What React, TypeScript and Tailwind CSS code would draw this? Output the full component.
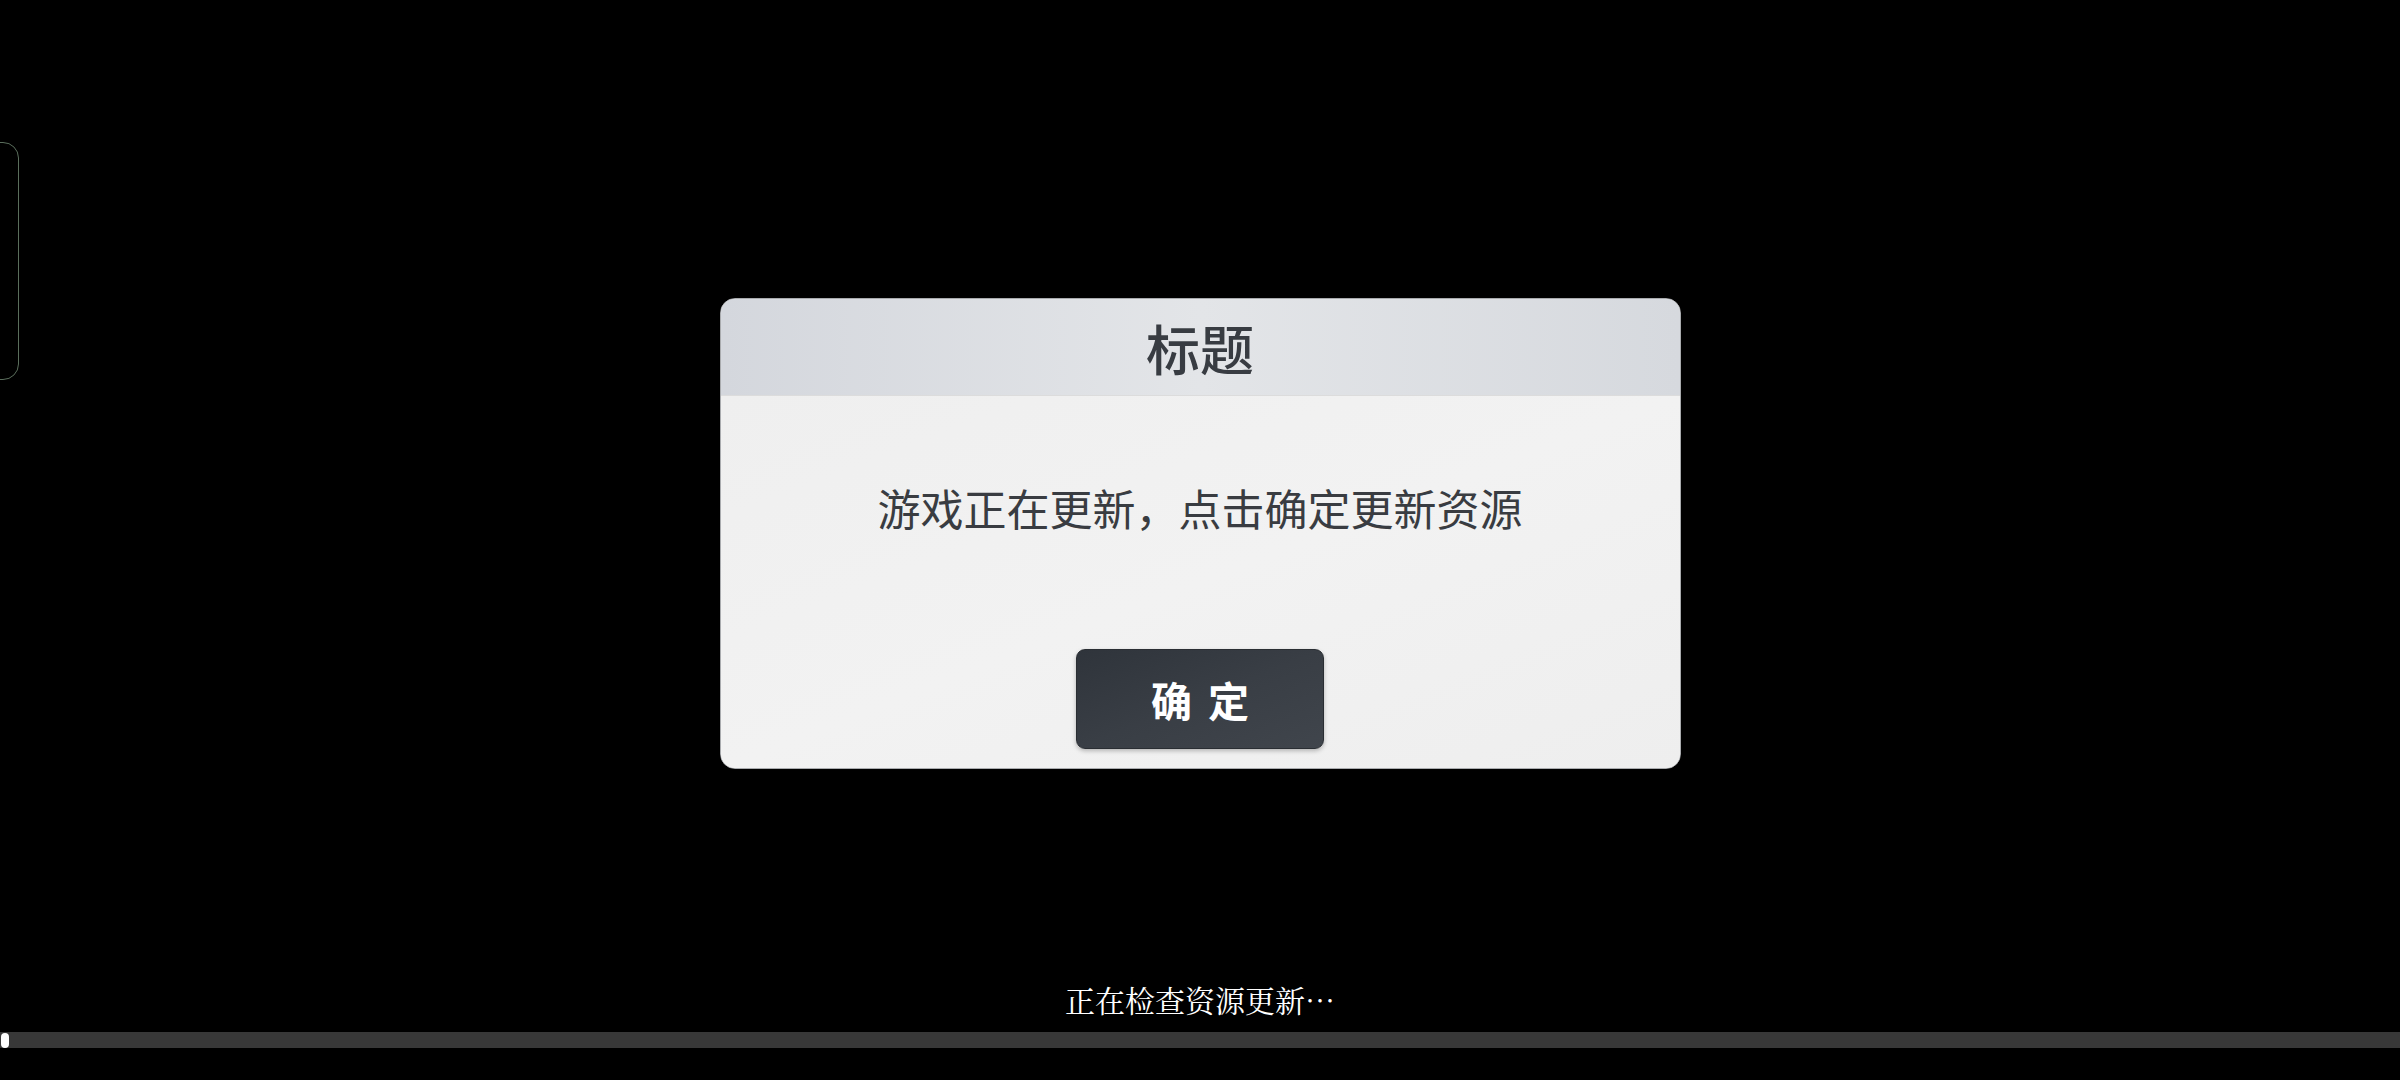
import React from "react";

export default function App() {
  return (
    <div
      className="relative w-[2400px] h-[1080px] bg-black overflow-hidden flex flex-col"
      style={{ fontFamily: '"Noto Sans CJK SC", "Noto Sans", sans-serif' }}
    >
      {/* left edge floating tab */}
      <div className="absolute left-[-24px] top-[142px] w-[43px] h-[238px] rounded-[16px] border border-[#5a6e5c]" />

      <div className="pt-[298px] flex justify-center">
        <div className="w-[961px] h-[471px] rounded-[15px] overflow-hidden border border-[#a9abae] flex flex-col bg-gradient-to-b from-[#eeeeee] to-[#f1f1f1] shadow-[0_2px_6px_rgba(0,0,0,0.4)]">
          <div className="h-[97px] shrink-0 flex items-center justify-center pt-[2px] bg-gradient-to-r from-[#d4d7dd] via-[#e3e5e8] to-[#d6d9de] border-b border-[#dcdcdc]">
            <span className="text-[54px] leading-[54px] font-medium text-[#383c42]">标题</span>
          </div>
          <div className="flex-1 flex flex-col items-center bg-gradient-to-br from-[#efefef] via-[#f2f2f2] to-[#eeeeee]">
            <div className="pt-[90px] text-[43px] leading-[43px] text-[#393c41] font-normal">
              游戏正在更新，点击确定更新资源
            </div>
            <button className="mt-[120px] w-[248px] h-[100px] rounded-[9px] bg-gradient-to-br from-[#2f343b] via-[#393e45] to-[#40454c] shadow-[0_2px_4px_rgba(0,0,0,0.25)] border border-[#2a2e33] flex items-center justify-center">
              <span className="text-[41px] leading-[41px] font-bold text-white tracking-[16px] pl-[16px]">确定</span>
            </button>
          </div>
        </div>
      </div>

      <div className="flex-1" />

      <div
        className="text-center text-[30px] leading-[30px] text-white"
        style={{ fontFamily: '"Noto Serif CJK SC", "Noto Sans CJK SC", serif' }}
      >
        正在检查资源更新…
      </div>
      <div className="mt-[18px] h-[16px] w-full bg-[#383838] flex items-center">
        <div className="ml-[1px] w-[8px] h-[15px] rounded-full bg-white" />
      </div>
      <div className="h-[32px]" />
    </div>
  );
}
